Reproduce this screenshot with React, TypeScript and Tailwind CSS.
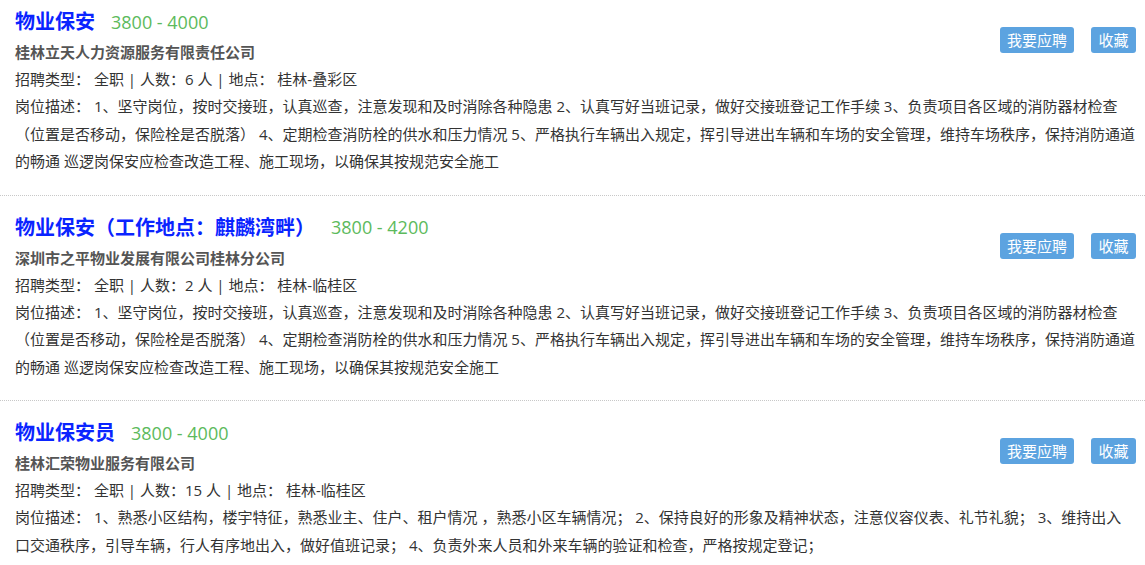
const jobs = [
  {
    title: '物业保安',
    salary: '3800 - 4000',
    company: '桂林立天人力资源服务有限责任公司',
    count: '6',
    place: '桂林-叠彩区',
    desc: '1、坚守岗位，按时交接班，认真巡查，注意发现和及时消除各种隐患 2、认真写好当班记录，做好交接班登记工作手续 3、负责项目各区域的消防器材检查（位置是否移动，保险栓是否脱落） 4、定期检查消防栓的供水和压力情况 5、严格执行车辆出入规定，挥引导进出车辆和车场的安全管理，维持车场秩序，保持消防通道的畅通 巡逻岗保安应检查改造工程、施工现场，以确保其按规范安全施工',
  },
  {
    title: '物业保安（工作地点：麒麟湾畔）',
    salary: '3800 - 4200',
    company: '深圳市之平物业发展有限公司桂林分公司',
    count: '2',
    place: '桂林-临桂区',
    desc: '1、坚守岗位，按时交接班，认真巡查，注意发现和及时消除各种隐患 2、认真写好当班记录，做好交接班登记工作手续 3、负责项目各区域的消防器材检查（位置是否移动，保险栓是否脱落） 4、定期检查消防栓的供水和压力情况 5、严格执行车辆出入规定，挥引导进出车辆和车场的安全管理，维持车场秩序，保持消防通道的畅通 巡逻岗保安应检查改造工程、施工现场，以确保其按规范安全施工',
  },
  {
    title: '物业保安员',
    salary: '3800 - 4000',
    company: '桂林汇荣物业服务有限公司',
    count: '15',
    place: '桂林-临桂区',
    desc: '1、熟悉小区结构，楼宇特征，熟悉业主、住户、租户情况 ，熟悉小区车辆情况； 2、保持良好的形象及精神状态，注意仪容仪表、礼节礼貌； 3、维持出入口交通秩序，引导车辆，行人有序地出入，做好值班记录； 4、负责外来人员和外来车辆的验证和检查，严格按规定登记；',
  },
];

export default function App() {
  return (
    <div className="w-[1145px] h-[565px] overflow-hidden bg-white font-['Open_Sans','Noto_Sans_CJK_SC',sans-serif] text-[15px] text-[#333]">
      {jobs.map((job, i) => (
        <div
          key={i}
          className={`pl-[15px] pr-[10px] pb-[19px] ${i === 0 ? 'pt-[7px]' : 'pt-[17px]'} ${i < jobs.length - 1 ? 'border-b border-dotted border-[#c8c8c8]' : ''}`}
        >
          <div className="flex items-start justify-between">
            <div>
              {/* title + salary */}
              <div className="flex items-center h-[30px]">
                <span className="text-[20px] font-bold text-[#0a24ff]">{job.title}</span>
                <span className="ml-[16px] text-[18px] text-[#5cba5c]">{job.salary}</span>
              </div>
              <div className="mt-[3px] leading-[24px] font-bold text-[#555]">{job.company}</div>
              <div className="mt-px leading-[28px]">
                招聘类型： 全职 | 人数：{job.count} 人 | 地点： {job.place}
              </div>
            </div>
            <div className="flex gap-[17px] mt-[20px] -mr-px">
              <button className="w-[74px] h-[26px] rounded-[3px] bg-[#5ca3e0] text-white leading-[26px]">我要应聘</button>
              <button className="w-[45px] h-[26px] rounded-[3px] bg-[#5ca3e0] text-white leading-[26px]">收藏</button>
            </div>
          </div>
          <p className="leading-[27.5px]">
            <span>岗位描述：</span> {job.desc}
          </p>
        </div>
      ))}
    </div>
  );
}
